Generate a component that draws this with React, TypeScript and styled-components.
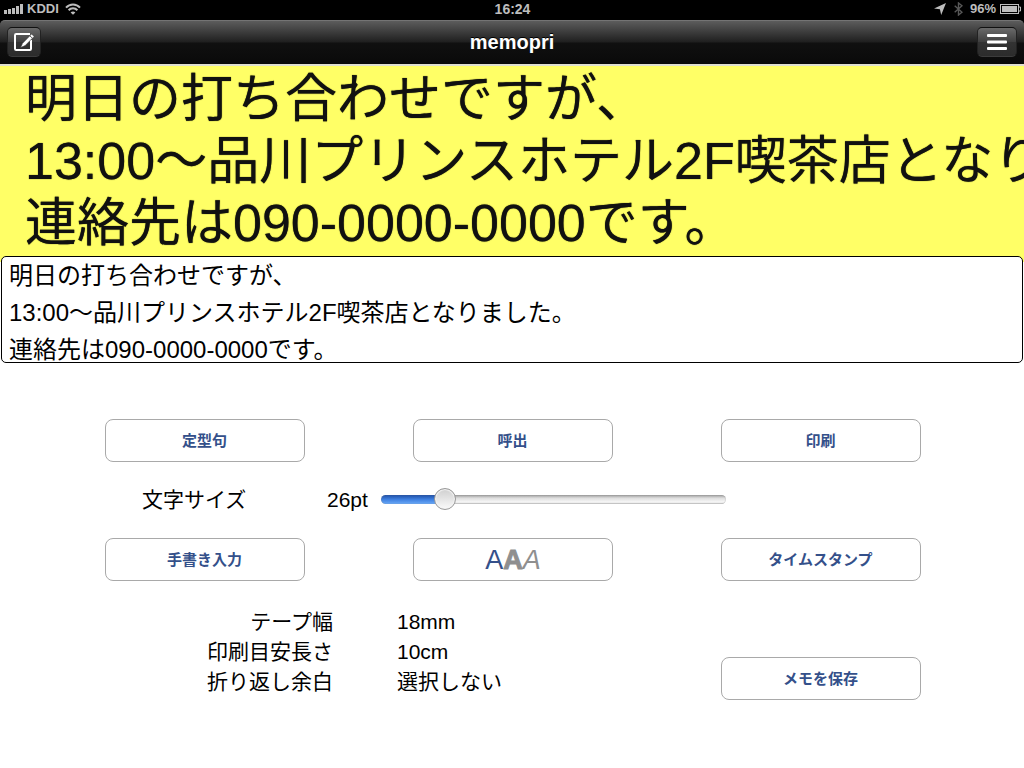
import React, { useState } from "react";
import styled, { createGlobalStyle, css } from "styled-components";

const GlobalStyle = createGlobalStyle`
  * { box-sizing: border-box; }
  body {
    margin: 0;
    background: #fff;
    color: #000;
    font-family: "Liberation Sans", "Noto Sans CJK JP", sans-serif;
  }
  button, textarea, input { font-family: inherit; }
`;

const Screen = styled.div`
  background: #000;
`;

const StatusBar = styled.header`
  display: grid;
  grid-template-columns: 1fr auto 1fr;
  align-items: center;
  height: 20px;
  padding: 0 3px 2px 4px;
  color: #bdbdbd;
  font-size: 13px;
  font-weight: bold;
  line-height: 18px;
`;

const StatusGroup = styled.div<{ $end?: boolean }>`
  display: flex;
  align-items: center;
  gap: ${(p) => (p.$end ? 4 : 3)}px;
  justify-content: ${(p) => (p.$end ? "flex-end" : "flex-start")};
  svg { display: block; }
`;

const Carrier = styled.span`
  margin-right: 3px;
`;

const BluetoothSlot = styled.span`
  margin: 0 3px 0 4px;
`;

const Clock = styled.time`
  font-size: 14px;
`;

const NavBar = styled.nav`
  display: flex;
  align-items: center;
  justify-content: space-between;
  height: 44px;
  padding: 0 7px 2px;
  border-top: 1px solid #747474;
  border-radius: 5px 5px 0 0;
  background: linear-gradient(#5c5c5c 0, #1f1f1f 49%, #101010 51%, #0a0a0a 100%);
`;

const Title = styled.h1`
  margin: 0;
  color: #fff;
  font-size: 20px;
  line-height: 24px;
  text-shadow: 0 -1px 0 #000;
`;

const NavSide = styled.div<{ $end?: boolean }>`
  display: flex;
  flex: 1;
  justify-content: ${(p) => (p.$end ? "flex-end" : "flex-start")};
`;

const NavButton = styled.button<{ $wide?: boolean }>`
  display: flex;
  align-items: center;
  justify-content: center;
  width: ${(p) => (p.$wide ? 40 : 34)}px;
  height: 30px;
  padding: 0;
  border: 1px solid #222;
  border-top-color: #111;
  border-bottom-color: #3c3c3c;
  border-radius: 5px;
  background: linear-gradient(#6a6a6a 0, #404040 49%, #333 51%, #2c2c2c 100%);
  color: #fff;
  svg { display: block; }
`;

const Preview = styled.section`
  height: 192px;
  overflow: hidden;
  border-top: 2px solid #e0e0d0;
  background: #ffff66;
`;

const PreviewText = styled.p`
  margin: 0;
  padding: 2px 25px 0;
  color: #111;
  font-size: 52px;
  line-height: 62px;
  white-space: pre;
  text-shadow: 0 0 1px #222200;
`;

const Main = styled.main`
  background: #fff;
`;

const Editor = styled.div`
  padding: 0 1px;
  background: linear-gradient(#ffff66 0 6px, #fff 6px);
`;

const MemoInput = styled.textarea`
  display: block;
  width: 100%;
  height: 107px;
  padding: 0 7px;
  overflow: hidden;
  border: 1px solid #000;
  border-radius: 5px;
  outline: none;
  resize: none;
  background: #fff;
  color: #000;
  font-size: 24px;
  line-height: 37px;
`;

const Controls = styled.div`
  padding: 56px 103px 68px 105px;
`;

const ButtonRow = styled.div`
  display: grid;
  grid-template-columns: repeat(3, 1fr);
  column-gap: 108px;
`;

const ActionButton = styled.button<{ $low?: boolean; $glyphs?: boolean }>`
  height: 43px;
  padding: ${(p) => (p.$glyphs ? "4px 0 0" : "0 1px 0 0")};
  border: 1px solid #a9a9a9;
  border-radius: 8px;
  background: #fff;
  color: #34508a;
  font-size: 15px;
  font-weight: bold;
  line-height: 20px;
  ${(p) => p.$low && css`margin-top: 50px;`}
`;

const StyleGlyph = styled.span<{ $kind: "plain" | "bold" | "italic" }>`
  color: ${(p) => (p.$kind === "plain" ? "#34508a" : "#8f8f8f")};
  font-size: 27px;
  font-style: ${(p) => (p.$kind === "italic" ? "italic" : "normal")};
  font-weight: ${(p) => (p.$kind === "bold" ? 700 : 400)};
  ${(p) => p.$kind === "bold" && css`-webkit-text-stroke: 1px #8f8f8f;`}
`;

const SizeRow = styled.div`
  display: flex;
  align-items: center;
  height: 76px;
  padding: 0 195px 0 37px;
  font-size: 21px;
  line-height: 30px;
`;

const SizeLabel = styled.label`
  width: 185px;
`;

const SizeValue = styled.output`
  width: 54px;
`;

const Slider = styled.input`
  flex: 1;
  min-width: 0;
  height: 24px;
  margin: 0 0 2px;
  appearance: none;
  background: transparent;

  &::-webkit-slider-runnable-track {
    height: 9px;
    border-radius: 5px;
    background:
      linear-gradient(#1f4fa6, #3f80e0 50%, #6aaaf8) 0 0 / var(--fill) 100% no-repeat,
      linear-gradient(#9c9c9c, #dedede 35%, #f8f8f8 80%, #bcbcbc);
    box-shadow: inset 0 0 1px #777;
  }

  &::-webkit-slider-thumb {
    appearance: none;
    width: 22px;
    height: 22px;
    margin-top: -7px;
    border: 1px solid #999;
    border-radius: 50%;
    background: linear-gradient(#cfcfcf, #fafafa);
    box-shadow: inset 0 0 1px 1px #f4f4f4;
  }
`;

const BottomRow = styled(ButtonRow)`
  align-items: start;
  margin-top: 26px;
`;

const Settings = styled.dl`
  display: grid;
  grid-column: span 2;
  grid-template-columns: 228px 1fr;
  column-gap: 64px;
  margin: 0;
  font-size: 21px;
  line-height: 30px;
`;

const SettingName = styled.dt`
  text-align: right;
`;

const SettingValue = styled.dd`
  margin: 0;
`;

const SignalIcon = () => (
  <svg width="20" height="10" viewBox="0 0 20 10" fill="currentColor" aria-hidden="true">
    <rect x="0" y="6" width="3" height="4" />
    <rect x="4" y="5" width="3" height="5" />
    <rect x="8" y="4" width="3" height="6" />
    <rect x="12" y="2" width="3" height="8" />
    <rect x="16" y="0" width="3" height="10" />
  </svg>
);

const WifiIcon = () => (
  <svg width="16" height="12" viewBox="0 0 16 12" fill="none" stroke="currentColor" strokeWidth="2" aria-hidden="true">
    <path d="M1 4.6C4.8.3 11.2.3 15 4.6" />
    <path d="M3.6 7.3c2.4-2.6 6.4-2.6 8.8 0" />
    <path d="M8 11.8 5.6 9.4c1.3-1.2 3.5-1.2 4.8 0Z" fill="currentColor" stroke="none" />
  </svg>
);

const LocationIcon = () => (
  <svg width="12" height="12" viewBox="0 0 11 11" fill="currentColor" aria-hidden="true">
    <path d="M11 0 6.6 11 5.4 5.8 0 5Z" />
  </svg>
);

const BluetoothIcon = () => (
  <svg width="9" height="14" viewBox="0 0 9 14" fill="none" stroke="#585858" strokeWidth="1.4" aria-hidden="true">
    <path d="M.7 3.8 8 10.2 4.5 13V1L8 3.8.7 10.2" />
  </svg>
);

const BatteryIcon = () => (
  <svg width="21" height="10" viewBox="0 0 21 10" aria-hidden="true">
    <rect x=".5" y=".5" width="18" height="9" fill="none" stroke="currentColor" />
    <rect x="2" y="2" width="15" height="6" fill="currentColor" />
    <path d="M19 3h1.5v4H19" fill="none" stroke="currentColor" />
  </svg>
);

const ComposeIcon = () => (
  <svg width="22" height="20" viewBox="0 0 22 20" fill="none" aria-hidden="true">
    <path d="M17 2H3.2Q2 2 2 3.2V16.8Q2 18 3.2 18H16.8Q18 18 18 16.8V8" stroke="#fff" strokeWidth="2" />
    <path d="M7.6 15.6 9.6 11.2 18.6 2 21.2 4.4 12.2 13.6Z" fill="#fff" stroke="#3a3a3a" strokeWidth=".6" />
    <path d="M16.8 3.8 19.4 6.2" stroke="#3a3a3a" strokeWidth=".8" />
  </svg>
);

const MenuIcon = () => (
  <svg width="20" height="16" viewBox="0 0 20 16" fill="#fff" aria-hidden="true">
    <rect y="0" width="20" height="3" rx="1" />
    <rect y="6.5" width="20" height="3" rx="1" />
    <rect y="13" width="20" height="3" rx="1" />
  </svg>
);

const MIN_SIZE = 6;
const MAX_SIZE = 128;

const settings = [
  ["テープ幅", "18mm"],
  ["印刷目安長さ", "10cm"],
  ["折り返し余白", "選択しない"],
];

export default function App() {
  const [memo, setMemo] = useState(
    "明日の打ち合わせですが、\n13:00〜品川プリンスホテル2F喫茶店となりました。\n連絡先は090-0000-0000です。"
  );
  const [size, setSize] = useState(26);
  const ratio = (size - MIN_SIZE) / (MAX_SIZE - MIN_SIZE);
  const fill = { "--fill": `calc(11px + (100% - 22px) * ${ratio})` } as React.CSSProperties;

  return (
    <Screen lang="ja">
      <GlobalStyle />
      <StatusBar>
        <StatusGroup>
          <SignalIcon />
          <Carrier>KDDI</Carrier>
          <WifiIcon />
        </StatusGroup>
        <Clock>16:24</Clock>
        <StatusGroup $end>
          <LocationIcon />
          <BluetoothSlot><BluetoothIcon /></BluetoothSlot>
          <span>96%</span>
          <BatteryIcon />
        </StatusGroup>
      </StatusBar>
      <NavBar>
        <NavSide>
          <NavButton type="button" aria-label="新規メモ"><ComposeIcon /></NavButton>
        </NavSide>
        <Title>memopri</Title>
        <NavSide $end>
          <NavButton type="button" $wide aria-label="メニュー"><MenuIcon /></NavButton>
        </NavSide>
      </NavBar>
      <Preview>
        <PreviewText>{memo}</PreviewText>
      </Preview>
      <Main>
        <Editor>
          <MemoInput aria-label="メモ" rows={3} spellCheck={false} value={memo} onChange={(e) => setMemo(e.target.value)} />
        </Editor>
        <Controls>
          <ButtonRow>
            <ActionButton type="button">定型句</ActionButton>
            <ActionButton type="button">呼出</ActionButton>
            <ActionButton type="button">印刷</ActionButton>
          </ButtonRow>
          <SizeRow>
            <SizeLabel htmlFor="size">文字サイズ</SizeLabel>
            <SizeValue htmlFor="size">{size}pt</SizeValue>
            <Slider
              id="size"
              type="range"
              min={MIN_SIZE}
              max={MAX_SIZE}
              value={size}
              style={fill}
              onChange={(e) => setSize(Number(e.target.value))}
            />
          </SizeRow>
          <ButtonRow>
            <ActionButton type="button">手書き入力</ActionButton>
            <ActionButton type="button" $glyphs>
              <StyleGlyph $kind="plain">A</StyleGlyph>
              <StyleGlyph $kind="bold">A</StyleGlyph>
              <StyleGlyph $kind="italic">A</StyleGlyph>
            </ActionButton>
            <ActionButton type="button">タイムスタンプ</ActionButton>
          </ButtonRow>
          <BottomRow>
            <Settings>
              {settings.map(([name, value]) => (
                <React.Fragment key={name}>
                  <SettingName>{name}</SettingName>
                  <SettingValue>{value}</SettingValue>
                </React.Fragment>
              ))}
            </Settings>
            <ActionButton type="button" $low>メモを保存</ActionButton>
          </BottomRow>
        </Controls>
      </Main>
    </Screen>
  );
}
